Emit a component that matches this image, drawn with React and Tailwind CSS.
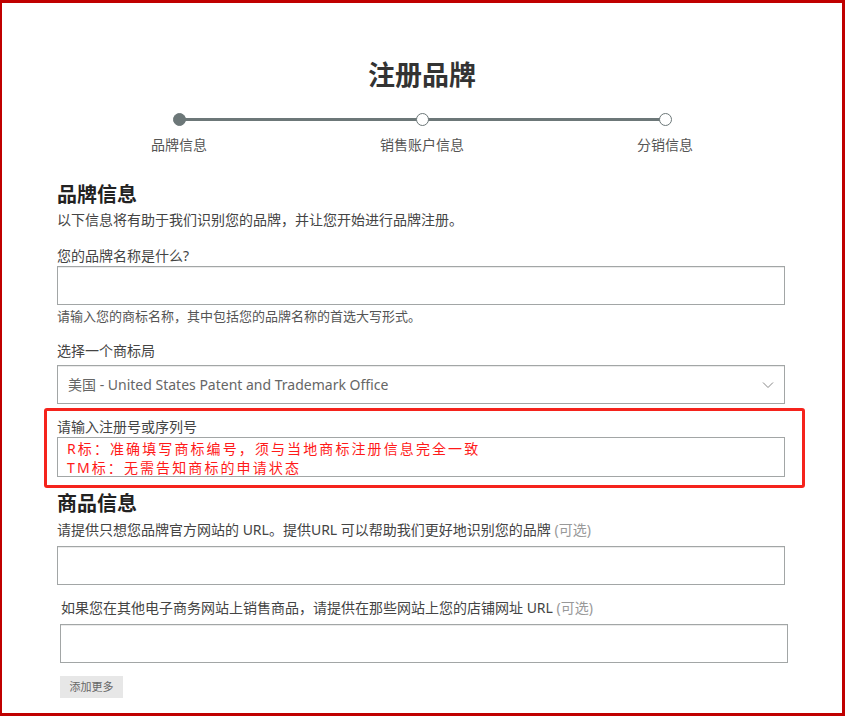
const FONT = { fontFamily: '"Noto Sans", "Noto Sans CJK SC", sans-serif' };

const steps = ['品牌信息', '销售账户信息', '分销信息'];

function Field({ className = '' }) {
  return (
    <div className={`h-[39px] w-[728px] border border-[#a2a6a6] shadow-[inset_0_1px_0_rgba(0,0,0,0.08)] bg-white ${className}`} />
  );
}

function Stepper() {
  return (
    <div className="relative mx-auto mt-[21px] flex w-[498px] justify-between">
      <div className="absolute left-[6px] right-[6px] top-[5px] h-[3px] bg-[#6c7778]" />
      {steps.map((s, i) => (
        <div key={s} className="relative flex w-3 flex-col items-center">
          <div
            className={`h-[13px] w-[13px] rounded-full border border-[#6c7778] ${i === 0 ? 'bg-[#6c7778]' : 'bg-white'}`}
          />
          <div className="mt-[9px] whitespace-nowrap text-[14px] leading-[20px] text-[#555]">{s}</div>
        </div>
      ))}
    </div>
  );
}

export default function App() {
  return (
    <div style={FONT} className="h-[716px] w-[846px] bg-white">
      <div className="h-[716px] w-[845px] border-[3px] border-[#c00000] border-l-[2px] text-[#333]">
        <h1 className="mt-[55px] text-center text-[27px] font-bold leading-[34px] text-[#333]">注册品牌</h1>

        <Stepper />

        <div className="pl-[55px]">
          <h2 className="mt-[26px] text-[20px] font-bold leading-[28px] text-[#222]">品牌信息</h2>
          <p className="mt-[1px] text-[14px] leading-[20px] text-[#444]">以下信息将有助于我们识别您的品牌，并让您开始进行品牌注册。</p>

          <div className="mt-[16px] text-[14px] leading-[20px] text-[#444]">您的品牌名称是什么?</div>
          <Field />
          <div className="mt-[1px] text-[13px] leading-[20px] text-[#555]">请输入您的商标名称，其中包括您的品牌名称的首选大写形式。</div>

          <div className="mt-[15px] text-[14px] leading-[20px] text-[#444]">选择一个商标局</div>
          <div className="mt-[4px] flex h-[39px] w-[728px] items-center justify-between border border-[#a2a6a6] pl-[10px] pr-[10px] shadow-[inset_0_1px_0_rgba(0,0,0,0.08)]">
            <span className="text-[14px] text-[#666]">美国 - United States Patent and Trademark Office</span>
            <svg width="12" height="8" viewBox="0 0 12 8" fill="none" stroke="#888" strokeWidth="1">
              <path d="M1 1.5 L6 6.5 L11 1.5" />
            </svg>
          </div>

          <div className="-ml-[13px] mt-[4px] w-[761px] rounded-[3px] border-[3px] border-[#f5231c] pb-[8px] pl-[10px] pt-[6px]">
            <div className="text-[14px] leading-[20px] text-[#444]">请输入注册号或序列号</div>
            <div className="h-[40px] w-[728px] border border-[#a2a6a6] pl-[9px] pt-[1px] text-[14px] leading-[19px] tracking-[2.1px] text-[#ff1a1a]">
              <div>R标：准确填写商标编号，须与当地商标注册信息完全一致</div>
              <div>TM标：无需告知商标的申请状态</div>
            </div>
          </div>

          <h2 className="mt-[2px] text-[20px] font-bold leading-[28px] text-[#222]">商品信息</h2>
          <p className="mt-[2px] text-[14px] leading-[20px] text-[#444]">
            请提供只想您品牌官方网站的 URL。提供URL 可以帮助我们更好地识别您的品牌 <span className="text-[#999]">(可选)</span>
          </p>
          <Field className="mt-[6px]" />

          <div className="ml-[4px] mt-[13px] text-[14px] leading-[20px] text-[#444]">
            如果您在其他电子商务网站上销售商品，请提供在那些网站上您的店铺网址 URL <span className="text-[#999]">(可选)</span>
          </div>
          <Field className="ml-[3px] mt-[6px]" />

          <button className="ml-[3px] mt-[13px] flex h-[22px] w-[63px] items-center justify-center bg-[#e7e7e7] text-[11px] text-[#666]">
            添加更多
          </button>
        </div>
      </div>
    </div>
  );
}
